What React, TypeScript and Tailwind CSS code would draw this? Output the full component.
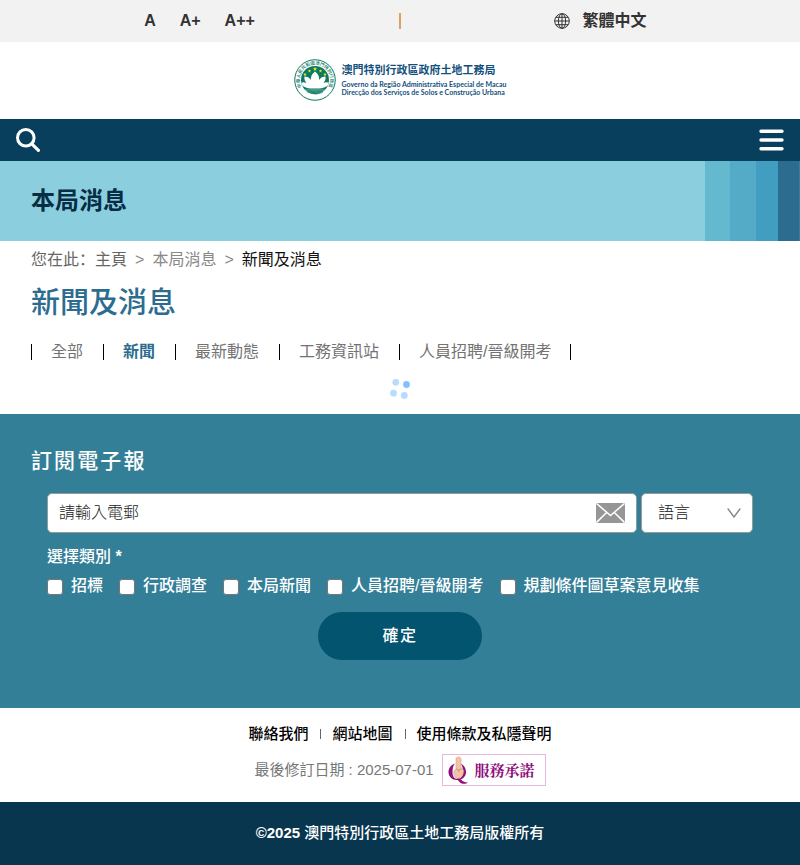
import React from "react";

const navTabs = ["全部", "新聞", "最新動態", "工務資訊站", "人員招聘/晉級開考"];
const categories = ["招標", "行政調查", "本局新聞", "人員招聘/晉級開考", "規劃條件圖草案意見收集"];
const ringText = "中華人民共和國澳門特別行政區";

function Star({ x, y, r }: { x: number; y: number; r: number }) {
  const points = Array.from({ length: 10 }, (_, i) => {
    const radius = i % 2 === 0 ? r : r * 0.45;
    const a = (Math.PI / 5) * i - Math.PI / 2;
    return `${(x + radius * Math.cos(a)).toFixed(2)},${(y + radius * Math.sin(a)).toFixed(2)}`;
  }).join(" ");
  return <polygon points={points} fill="#f5e21a" />;
}

function Emblem() {
  return (
    <svg width="42" height="42" viewBox="0 0 84 84" aria-hidden="true" className="shrink-0">
      <defs>
        <path id="ring" d="M15 56 A30.500 30.500 0 1 1 69 56" />
        <path id="ringBottom" d="M18 62 A37 37 0 0 0 66 62" />
        <clipPath id="disc">
          <circle cx="42" cy="42" r="28" />
        </clipPath>
      </defs>
      <circle cx="42" cy="42" r="40.5" fill="#fff" stroke="#0b7a62" strokeWidth="2" />
      <circle cx="42" cy="42" r="28" fill="#0b7a62" />
      <g clipPath="url(#disc)">
        <path d="M10 62h64M10 66h64" stroke="#9fd0c4" strokeWidth="1.5" />
        <path
          d="M42 25c-7 5-9 11-8 17-3-5-8-7-13-7-1 5 1 9 4 13-4-2-8-2-12 0 3 7 12 11 21 11h16c9 0 18-4 21-11-4-2-8-2-12 0 3-4 5-8 4-13-5 0-10 2-13 7 1-6-1-12-8-17z"
          fill="#fff"
        />
      </g>
      <Star x={42} y={20} r={4.5} />
      <Star x={31} y={24} r={3.5} />
      <Star x={53} y={24} r={3.5} />
      <Star x={22} y={31} r={3.5} />
      <Star x={62} y={31} r={3.5} />
      <text fontSize="9" fill="#0b7a62" fontFamily="Noto Sans CJK TC, sans-serif" fontWeight="500">
        <textPath href="#ring" startOffset="50%" textAnchor="middle">{ringText}</textPath>
      </text>
      <text fontSize="9" fill="#0b7a62" fontFamily="Lato, sans-serif" fontWeight="700">
        <textPath href="#ringBottom" startOffset="50%" textAnchor="middle">MACAU</textPath>
      </text>
    </svg>
  );
}

function TopBar() {
  return (
    <div className="flex h-[42px] items-center bg-[#f2f2f2] font-bold text-[#333]">
      <div className="flex flex-1 justify-center gap-6">
        <button type="button">A</button>
        <button type="button">A+</button>
        <button type="button">A++</button>
      </div>
      <div className="h-4 w-0.5 bg-[#dba15f]" />
      <div className="flex flex-1 items-center justify-center">
        <a href="#lang" className="flex items-center gap-3">
          <svg width="16" height="16" viewBox="0 0 16 16" fill="none" stroke="#333" aria-hidden="true">
            <circle cx="8" cy="8" r="7.3" />
            <ellipse cx="8" cy="8" rx="3.6" ry="7.3" />
            <path d="M8 .7v14.6M.7 8h14.6M2 4.3h12M2 11.7h12" />
          </svg>
          <span>繁體中文</span>
        </a>
      </div>
    </div>
  );
}

function Logo() {
  return (
    <header className="flex h-[77px] items-center justify-center pb-0.5">
      <a href="#home" className="flex items-center gap-1.5">
        <Emblem />
        <span className="flex flex-col whitespace-nowrap text-[#14507c]">
          <span className="mb-1 text-[11px] leading-3 font-bold">澳門特別行政區政府土地工務局</span>
          <span className="font-['Lato'] text-[7px] leading-[8px] font-bold">Governo da Região Administrativa Especial de Macau</span>
          <span className="font-['Lato'] text-[7px] leading-[8px] font-bold">Direcção dos Serviços de Solos e Construção Urbana</span>
        </span>
      </a>
    </header>
  );
}

function NavBar() {
  return (
    <nav className="flex h-[42px] items-center justify-between bg-[#073f5c] px-4">
      <button type="button" aria-label="搜尋">
        <svg width="24" height="24" viewBox="0 0 24 24" fill="none" stroke="#fff" aria-hidden="true">
          <circle cx="9.8" cy="9.8" r="8.3" strokeWidth="3" />
          <path d="M15.8 15.8l6.6 6.6" strokeWidth="3.2" strokeLinecap="round" />
        </svg>
      </button>
      <button type="button" aria-label="選單">
        <svg width="25" height="22" viewBox="0 0 25 22" stroke="#fff" strokeWidth="3.4" strokeLinecap="round" aria-hidden="true">
          <path d="M2 2.2h21M2 11h21M2 19.8h21" />
        </svg>
      </button>
    </nav>
  );
}

function Banner() {
  return (
    <div className="flex h-20 items-stretch bg-[#8bcfde]">
      <h2 className="flex flex-1 items-center pl-[31px] text-2xl font-bold text-[#062d45]">本局消息</h2>
      <div className="w-[25px] bg-[#64b9cf]" />
      <div className="w-[26px] bg-[#53abc8]" />
      <div className="w-[22px] bg-[#429ec1]" />
      <div className="w-[21px] bg-[#2c6d8f]" />
      <div className="w-px bg-[#348198]" />
    </div>
  );
}

function Spinner() {
  return (
    <svg width="22" height="22" viewBox="0 0 22 22" className="mx-auto mt-[18px]" role="img" aria-label="載入中">
      <g fill="#b8dcff">
        <circle cx="6.8" cy="4.3" r="3.4" />
        <circle cx="4.5" cy="15.2" r="3.4" />
        <circle cx="15.3" cy="17.4" r="3.4" />
      </g>
      <circle cx="17.5" cy="6.5" r="3.4" fill="#83c1fe" />
    </svg>
  );
}

function Content() {
  return (
    <main className="px-[31px] pt-[7px] pb-3.5">
      <div className="flex items-center gap-2 leading-6 text-[#666]">
        <span>
          您在此<span lang="zh-CN" className="font-['Noto_Sans_CJK_SC',sans-serif] leading-none">：</span>
          <a href="#home">主頁</a>
        </span>
        <span className="text-[#888]">&gt;</span>
        <a href="#news" className="text-[#888]">本局消息</a>
        <span className="text-[#888]">&gt;</span>
        <span className="text-[#111]">新聞及消息</span>
      </div>
      <h1 className="mt-[13px] text-[29px] leading-9 font-medium text-[#2c6d8f]">新聞及消息</h1>
      <ul className="mt-[23px] flex leading-4 text-[#737373]">
        {navTabs.map((tab) => (
          <li key={tab} className="border-l border-black pr-5 pl-[19px] last:border-r last:pr-[18px]">
            <a href="#tab" className={tab === "新聞" ? "block font-bold text-[#2c6d8f]" : "block"}>
              {tab}
            </a>
          </li>
        ))}
      </ul>
      <Spinner />
    </main>
  );
}

function Newsletter() {
  return (
    <section className="bg-[#347f98] px-[31px] pt-[33px] pb-12 text-white">
      <h2 className="text-[21px] leading-7 font-medium tracking-widest">訂閱電子報</h2>
      <form className="mt-[18px] px-4" onSubmit={(e) => e.preventDefault()}>
        <div className="flex gap-1">
          <div className="relative flex-1">
            <input
              type="email"
              aria-label="請輸入電郵"
              placeholder="請輸入電郵"
              className="h-10 w-full rounded-[5px] border border-[#999] bg-white pr-12 pl-[11px] font-light text-[#222] placeholder:text-[#222]"
            />
            <svg width="29" height="20" viewBox="0 0 30 20" preserveAspectRatio="none" className="absolute top-2.5 right-3" aria-hidden="true">
              <rect width="30" height="20" fill="#969696" />
              <path d="M.5 .5L15 12.5 29.5 .5M.5 19.5L11 9.5M29.5 19.5L19 9.5" fill="none" stroke="#fff" strokeWidth="1.6" />
            </svg>
          </div>
          <div className="relative">
            <select aria-label="語言" className="h-10 w-28 appearance-none rounded-[5px] border border-[#999] bg-white px-4 font-light text-[#222]">
              <option>語言</option>
            </select>
            <svg width="14" height="10" viewBox="0 0 14 10" fill="none" stroke="#888" strokeWidth="1.4" className="pointer-events-none absolute top-[15px] right-3" aria-hidden="true">
              <path d="M.7 .5L7 9 13.3 .5" />
            </svg>
          </div>
        </div>
        <fieldset className="font-medium">
          <legend className="pt-3 leading-6">選擇類別 <span className="font-bold">*</span></legend>
          <div className="mt-[5px] flex flex-wrap gap-x-4">
            {categories.map((name) => (
              <label key={name} className="flex items-center gap-2 leading-6">
                <input type="checkbox" className="mt-0.5 size-4 appearance-none rounded-[3px] border border-[#767676] bg-white" />
                {name}
              </label>
            ))}
          </div>
        </fieldset>
        <button type="submit" className="mx-auto mt-3.5 block h-12 w-[164px] rounded-full bg-[#02546f] font-medium tracking-widest">
          確定
        </button>
      </form>
    </section>
  );
}

function ServiceBadge() {
  return (
    <a href="#pledge" className="flex h-8 w-[104px] items-center border border-[#e6b8dc] pl-1">
      <svg width="24" height="30" viewBox="0 0 24 30" aria-hidden="true">
        <path d="M8 8.5C3.500 10 1.500 13.500 1.500 17c0 4.500 3.500 8 8.500 8 5.500 0 9-3.500 9-8 0-3.500-2-7-5.500-8.500 2 2 2.500 5 2.500 8.500 0 4-2 7-5.500 7S5.500 21 5.500 17c0-3.500.5-6.500 2.500-8.500z" fill="#8f0d7c" />
        <path d="M11 23c3 0 4 5 10 4.500-1.500 1.500-6 2-8 0-1.200-1.200-2-3-4-3z" fill="#8f0d7c" />
        <path d="M9 14V4c0-2.700 5-2.700 5 0v9c2 .5 3 2 2.700 4-.5 3.500-3 6.500-5.700 6.500-2.500 0-4-2.500-4.300-5-.2-2 .6-3.700 2.300-4.500z" fill="#f2c3a6" stroke="#c98f75" strokeWidth=".5" />
        <path d="M9 14c2 .2 3 1.200 3 3M11.500 15l3-1" fill="none" stroke="#b97a62" strokeWidth=".7" />
      </svg>
      <span className="ml-1 font-['Noto_Serif_CJK_TC','Noto_Sans_CJK_TC',serif] text-[15px] font-bold text-[#8f0d7c]">服務承諾</span>
    </a>
  );
}

function Footer() {
  return (
    <footer>
      <div className="flex flex-col items-center pt-4 pb-4 text-[15px]">
        <div className="flex items-center gap-3 leading-5 font-medium text-black">
          <a href="#contact">聯絡我們</a>
          <span className="-mr-px h-2.5 w-px bg-[#666]" />
          <a href="#sitemap">網站地圖</a>
          <span className="-mr-px h-2.5 w-px bg-[#666]" />
          <a href="#terms">使用條款及私隱聲明</a>
        </div>
        <div className="mt-2.5 flex items-center gap-2 text-[#777]">
          <span>最後修訂日期 : 2025-07-01</span>
          <ServiceBadge />
        </div>
      </div>
      <div className="flex h-[63px] items-center justify-center bg-[#08364f] text-[15px] font-medium text-white">
        <p><span className="font-bold">©2025</span> 澳門特別行政區土地工務局版權所有</p>
      </div>
    </footer>
  );
}

export default function App() {
  return (
    <div className="bg-white font-['Liberation_Sans','Noto_Sans_CJK_TC',sans-serif] text-base">
      <TopBar />
      <Logo />
      <NavBar />
      <Banner />
      <Content />
      <Newsletter />
      <Footer />
    </div>
  );
}
